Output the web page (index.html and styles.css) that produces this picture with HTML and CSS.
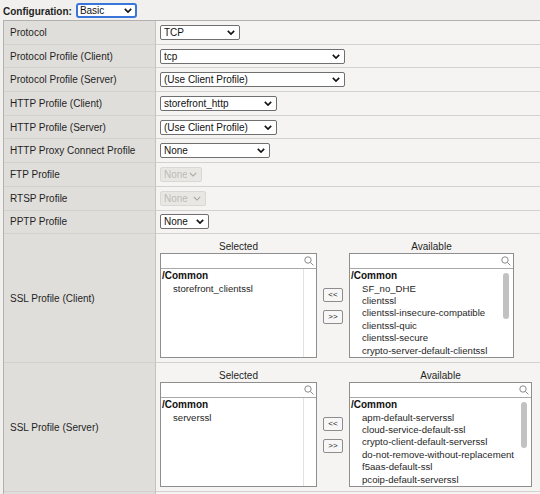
FILE: index.html
```html
<!DOCTYPE html>
<html lang="en">
<head>
  <meta charset="UTF-8">
  <title>Virtual Server Configuration</title>
  <link rel="stylesheet" href="styles.css">
</head>
<body>
  <!-- configuration mode -->
  <div class="config-bar">
    <label class="config-label" for="config-mode">Configuration:</label>
    <span class="select-wrap focused w-basic">
      <select id="config-mode"><option>Basic</option><option>Advanced</option></select>
      <svg class="chevron" viewBox="0 0 10 6"><path d="M1 1l4 4 4-4"/></svg>
    </span>
  </div>

  <table class="props">
    <tr>
      <th>Protocol</th>
      <td><span class="select-wrap w-tcp"><select><option>TCP</option><option>UDP</option></select><svg class="chevron" viewBox="0 0 10 6"><path d="M1 1l4 4 4-4"/></svg></span></td>
    </tr>
    <tr>
      <th>Protocol Profile (Client)</th>
      <td><span class="select-wrap w-wide"><select><option>tcp</option></select><svg class="chevron" viewBox="0 0 10 6"><path d="M1 1l4 4 4-4"/></svg></span></td>
    </tr>
    <tr>
      <th>Protocol Profile (Server)</th>
      <td><span class="select-wrap w-wide"><select><option>(Use Client Profile)</option></select><svg class="chevron" viewBox="0 0 10 6"><path d="M1 1l4 4 4-4"/></svg></span></td>
    </tr>
    <tr>
      <th>HTTP Profile (Client)</th>
      <td><span class="select-wrap w-http"><select><option>storefront_http</option></select><svg class="chevron" viewBox="0 0 10 6"><path d="M1 1l4 4 4-4"/></svg></span></td>
    </tr>
    <tr>
      <th>HTTP Profile (Server)</th>
      <td><span class="select-wrap w-http"><select><option>(Use Client Profile)</option></select><svg class="chevron" viewBox="0 0 10 6"><path d="M1 1l4 4 4-4"/></svg></span></td>
    </tr>
    <tr>
      <th>HTTP Proxy Connect Profile</th>
      <td><span class="select-wrap w-proxy"><select><option>None</option></select><svg class="chevron" viewBox="0 0 10 6"><path d="M1 1l4 4 4-4"/></svg></span></td>
    </tr>
    <tr>
      <th>FTP Profile</th>
      <td><span class="select-wrap disabled w-ftp"><select disabled><option>None</option></select><svg class="chevron" viewBox="0 0 10 6"><path d="M1 1l4 4 4-4"/></svg></span></td>
    </tr>
    <tr>
      <th>RTSP Profile</th>
      <td><span class="select-wrap disabled w-rtsp"><select disabled><option>None</option></select><svg class="chevron" viewBox="0 0 10 6"><path d="M1 1l4 4 4-4"/></svg></span></td>
    </tr>
    <tr>
      <th>PPTP Profile</th>
      <td><span class="select-wrap w-pptp"><select><option>None</option></select><svg class="chevron" viewBox="0 0 10 6"><path d="M1 1l4 4 4-4"/></svg></span></td>
    </tr>

    <!-- SSL client profiles -->
    <tr class="ssl-row">
      <th>SSL Profile (Client)</th>
      <td>
        <div class="dual-list">
          <div class="list-title">Selected</div>
          <div></div>
          <div class="list-title">Available</div>

          <div class="list-box w-selected">
            <div class="search"><input type="text"><svg class="magnifier" viewBox="0 0 10 10"><circle cx="4" cy="4" r="3.2"/><path d="M6.4 6.4l3 3"/></svg></div>
            <div class="list-body">
              <ul class="items">
                <li class="group">/Common</li>
                <li>storefront_clientssl</li>
              </ul>
              <div class="track lined"></div>
            </div>
          </div>
          <div class="move-buttons">
            <button>&lt;&lt;</button>
            <button>&gt;&gt;</button>
          </div>
          <div class="list-box w-avail-client">
            <div class="search"><input type="text"><svg class="magnifier" viewBox="0 0 10 10"><circle cx="4" cy="4" r="3.2"/><path d="M6.4 6.4l3 3"/></svg></div>
            <div class="list-body">
              <ul class="items">
                <li class="group">/Common</li>
                <li>SF_no_DHE</li>
                <li>clientssl</li>
                <li>clientssl-insecure-compatible</li>
                <li>clientssl-quic</li>
                <li>clientssl-secure</li>
                <li>crypto-server-default-clientssl</li>
              </ul>
              <div class="track"><div class="thumb"></div></div>
            </div>
          </div>
        </div>
      </td>
    </tr>

    <!-- SSL server profiles -->
    <tr class="ssl-row">
      <th>SSL Profile (Server)</th>
      <td>
        <div class="dual-list">
          <div class="list-title">Selected</div>
          <div></div>
          <div class="list-title">Available</div>

          <div class="list-box w-selected">
            <div class="search"><input type="text"><svg class="magnifier" viewBox="0 0 10 10"><circle cx="4" cy="4" r="3.2"/><path d="M6.4 6.4l3 3"/></svg></div>
            <div class="list-body">
              <ul class="items">
                <li class="group">/Common</li>
                <li>serverssl</li>
              </ul>
              <div class="track lined"></div>
            </div>
          </div>
          <div class="move-buttons">
            <button>&lt;&lt;</button>
            <button>&gt;&gt;</button>
          </div>
          <div class="list-box w-avail-server">
            <div class="search"><input type="text"><svg class="magnifier" viewBox="0 0 10 10"><circle cx="4" cy="4" r="3.2"/><path d="M6.4 6.4l3 3"/></svg></div>
            <div class="list-body">
              <ul class="items">
                <li class="group">/Common</li>
                <li>apm-default-serverssl</li>
                <li>cloud-service-default-ssl</li>
                <li>crypto-client-default-serverssl</li>
                <li>do-not-remove-without-replacement</li>
                <li>f5aas-default-ssl</li>
                <li>pcoip-default-serverssl</li>
              </ul>
              <div class="track"><div class="thumb"></div></div>
            </div>
          </div>
        </div>
      </td>
    </tr>

    <!-- next row, below the fold -->
    <tr>
      <th></th>
      <td></td>
    </tr>
  </table>
</body>
</html>
```

FILE: styles.css
```css
/* page */
body {
  margin: 0;
  padding: 0 0 0 3px;
  background: #f1f0ee;
  font-family: "Liberation Sans", Arial, sans-serif;
  font-size: 10px;
  color: #1f1f1f;
  overflow: hidden;
}

/* configuration bar */
.config-bar {
  display: flex;
  align-items: center;
  height: 20px;
}

.config-label {
  font-weight: bold;
  margin-right: 4px;
  padding-top: 2px;
}

/* selects */
.select-wrap {
  position: relative;
  display: inline-block;
  height: 15px;
  vertical-align: middle;
}

.select-wrap select {
  -webkit-appearance: none;
  appearance: none;
  box-sizing: border-box;
  width: 100%;
  height: 100%;
  margin: 0;
  padding: 0 14px 0 3px;
  font: 10px "Liberation Sans", Arial, sans-serif;
  color: #111;
  background: #fff;
  border: 1px solid #6f6f6f;
  border-radius: 2px;
  outline: none;
}

.select-wrap .chevron {
  position: absolute;
  right: 5px;
  top: 5px;
  width: 8px;
  height: 5px;
  fill: none;
  stroke: #111;
  stroke-width: 2;
  pointer-events: none;
}

.select-wrap.focused select {
  border: 2px solid #3a76da;
  border-radius: 3px;
  padding-left: 2px;
  line-height: 11px;
}

.select-wrap.disabled select {
  background: #e4e2df;
  border-color: #cfcdca;
  color: #a5a3a0;
}

.select-wrap.disabled .chevron {
  stroke: #a5a3a0;
  stroke-width: 1.3;
}

.w-basic { width: 61px; }
.w-tcp { width: 80px; }
.w-wide { width: 185px; }
.w-http { width: 117px; }
.w-proxy { width: 110px; }
.w-ftp { width: 42px; }
.w-rtsp { width: 46px; }
.w-pptp { width: 49px; }

/* property table */
.props {
  width: 540px;
  border-spacing: 0;
  border-top: 1px solid #b3b1ae;
  border-left: 1px solid #b3b1ae;
}

.props th,
.props td {
  box-sizing: border-box;
  height: 23.7px;
  padding: 0;
  border-bottom: 1px solid #d3d1ce;
  vertical-align: middle;
}

.props th {
  width: 152px;
  padding-left: 6px;
  text-align: left;
  font-weight: normal;
  background: #e0dedb;
  border-right: 1px solid #c5c3c0;
}

.props td {
  padding-left: 4px;
  background: #f5f4f2;
}

.props .ssl-row th,
.props .ssl-row td {
  height: 129px;
}

/* dual list */
.dual-list {
  display: grid;
  grid-template-columns: auto 20px auto;
  justify-content: start;
  column-gap: 6px;
  padding: 6px 0 4px;
}

.list-title {
  text-align: center;
  line-height: 13px;
}

.list-box {
  box-sizing: border-box;
  height: 105px;
  background: #fff;
  border: 1px solid #8e8e8e;
  display: flex;
  flex-direction: column;
}

.w-selected { width: 157px; }
.w-avail-client { width: 165px; }
.w-avail-server { width: 183px; }

.search {
  position: relative;
  height: 14px;
  border-bottom: 1px solid #a8a8a8;
}

.search input {
  box-sizing: border-box;
  width: 100%;
  height: 100%;
  border: none;
  margin: 0;
  padding: 0 14px 0 2px;
  font: 10px "Liberation Sans", Arial, sans-serif;
  background: transparent;
}

.magnifier {
  position: absolute;
  right: 2px;
  top: 2px;
  width: 10px;
  height: 10px;
  fill: none;
  stroke: #8a8a8a;
  stroke-width: 1;
}

.list-body {
  flex: 1;
  display: flex;
  min-height: 0;
}

.items {
  flex: 1;
  margin: 0;
  padding: 1px 0 0 0;
  list-style: none;
  white-space: nowrap;
  overflow: hidden;
  font-size: 9.6px;
}

.items li {
  line-height: 12.4px;
  padding-left: 12px;
  color: #1f1f1f;
}

.items li.group {
  padding-left: 1px;
  font-weight: bold;
  font-size: 10px;
  color: #111;
}

.track {
  width: 12px;
  flex: none;
}

.track.lined {
  border-left: 1px solid #e2e2e2;
}

.thumb {
  width: 6px;
  height: 46px;
  margin: 4px 0 0 2px;
  border-radius: 3px;
  background: #c2c2c2;
}

.move-buttons {
  align-self: center;
  display: flex;
  flex-direction: column;
  gap: 8px;
}

.move-buttons button {
  box-sizing: border-box;
  width: 20px;
  height: 14px;
  padding: 0;
  font: 8px "Liberation Sans", Arial, sans-serif;
  color: #222;
  background: #f7f7f7;
  border: 1px solid #8d8d8d;
  border-radius: 2px;
}
```
